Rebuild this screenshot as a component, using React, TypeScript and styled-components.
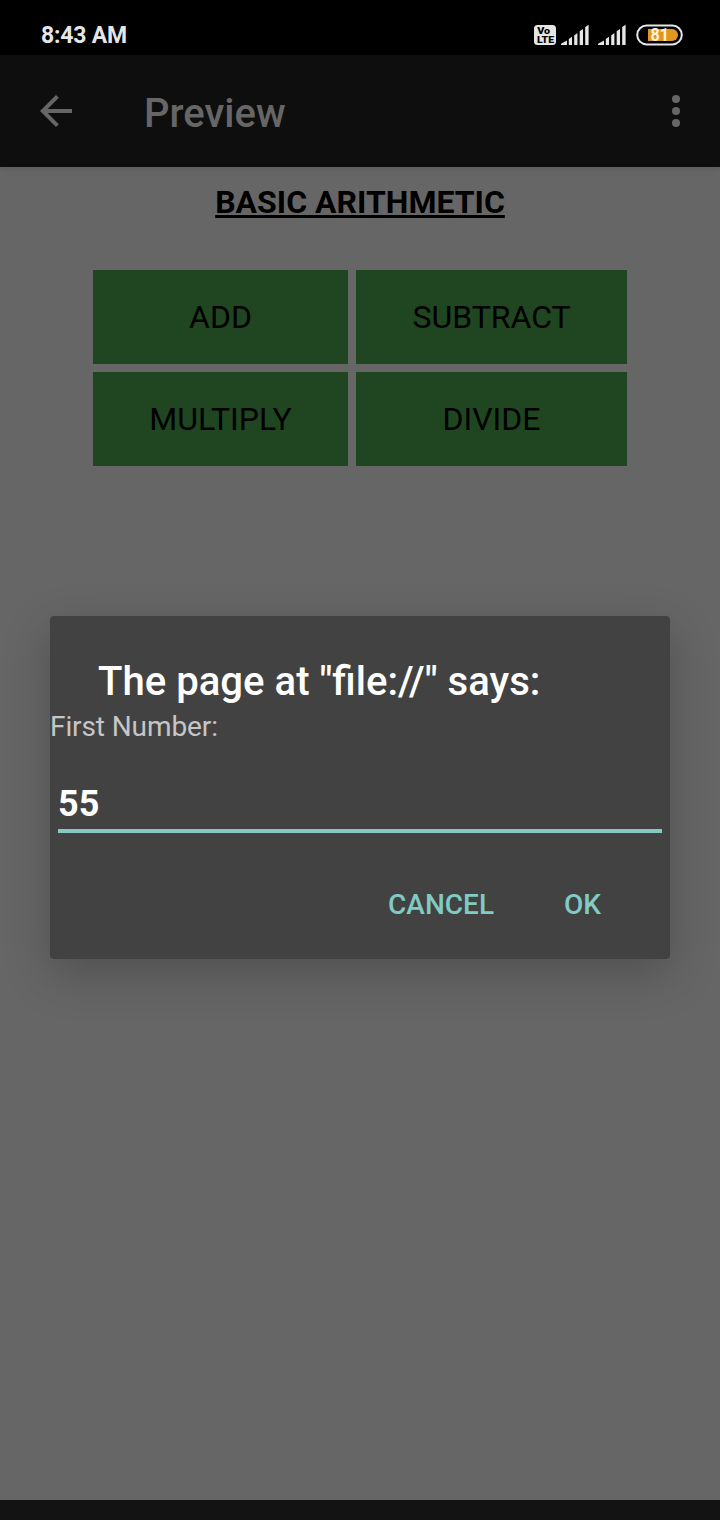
import React from "react";
import styled, { createGlobalStyle } from "styled-components";

const GlobalStyle = createGlobalStyle`
  * { box-sizing: border-box; }
  body {
    margin: 0;
    background: #666666;
    font-family: Roboto, "Liberation Sans", sans-serif;
  }
  button, input { font-family: inherit; }
`;

const Screen = styled.div`
  position: relative;
  display: flex;
  flex-direction: column;
  width: 720px;
  height: 1520px;
  overflow: hidden;
  background: #666666;
`;

const StatusBar = styled.header`
  display: flex;
  align-items: center;
  justify-content: space-between;
  height: 55px;
  padding: 15px 37px 0 41px;
  background: #000;
`;

const Clock = styled.span`
  padding-top: 2px;
  color: #e6e6e6;
  font-size: 23px;
  font-weight: 700;
  letter-spacing: -0.2px;
  line-height: 38px;
`;

const Indicators = styled.svg`
  display: block;
  width: 150px;
  height: 24px;
`;

const Toolbar = styled.nav`
  display: flex;
  align-items: center;
  height: 112px;
  padding: 0 20px 0 32px;
  background: #0e0e0e;
  box-shadow: 0 1px 6px rgba(0, 0, 0, 0.12);
`;

const IconButton = styled.button`
  display: flex;
  width: 48px;
  height: 48px;
  padding: 0;
  border: 0;
  background: none;
  color: #666666;
`;

const ToolbarTitle = styled.h1`
  flex: 1;
  margin: 0 0 0 64px;
  padding-top: 5px;
  color: #666666;
  font-size: 40px;
  font-weight: 500;
  line-height: 47px;
`;

const Page = styled.main`
  flex: 1;
  display: flex;
  flex-direction: column;
  align-items: center;
  padding-top: 16px;
`;

const Heading = styled.h2`
  margin: 0 0 49px;
  color: #000;
  font-size: 32px;
  font-weight: 700;
  line-height: 38px;
  text-decoration: underline;
  text-decoration-thickness: 3px;
  text-decoration-skip-ink: none;
  text-underline-offset: 2px;
`;

const Operations = styled.div`
  display: grid;
  grid-template-columns: 255px 271px;
  grid-auto-rows: 94px;
  gap: 8px;
`;

const Operation = styled.button`
  padding: 0;
  border: 0;
  background: #1f4621;
  color: #000;
  font-size: 32px;
  line-height: 38px;
`;

const SystemBar = styled.footer`
  height: 20px;
  background: #131313;
`;

const Dialog = styled.section`
  position: absolute;
  top: 616px;
  left: 50px;
  display: flex;
  flex-direction: column;
  width: 620px;
  height: 343px;
  padding-top: 42px;
  border-radius: 4px;
  background: #424242;
  box-shadow: 0 15px 48px rgba(0, 0, 0, 0.22);
`;

const DialogTitle = styled.h2`
  margin: 0 48px;
  color: #fff;
  font-size: 40.12px;
  font-weight: 500;
  line-height: 47px;
  white-space: nowrap;
`;

const Message = styled.label`
  margin-top: 5px;
  color: #c6c6c6;
  font-size: 28px;
  letter-spacing: -0.1px;
  line-height: 33px;
`;

const Answer = styled.input`
  height: 51px;
  margin: 39px 8px 0;
  padding: 0 0 4px;
  border: 0;
  border-bottom: 4px solid #88c7c2;
  outline: 0;
  background: none;
  color: #fff;
  font-size: 36px;
  font-weight: 700;
  line-height: 43px;
`;

const Actions = styled.div`
  display: flex;
  justify-content: flex-end;
  gap: 70px;
  margin-top: 55px;
  padding-right: 69px;
`;

const Action = styled.button`
  padding: 0;
  border: 0;
  background: none;
  color: #80cbc4;
  font-size: 28px;
  font-weight: 500;
  line-height: 33px;
`;

const operations = ["ADD", "SUBTRACT", "MULTIPLY", "DIVIDE"];

const Signal = ({ x }: { x: number }) => (
  <g transform={`translate(${x} 0)`} fill="#e6e6e6">
    <path d="M0 22V20.8L6 17.5V22Z" />
    <path d="M7.8 16 11 13.8V22H7.8Z" />
    <path d="M13.2 12.5 16.4 10V22H13.2Z" />
    <path d="M18.7 8.3 22 6V22H18.7Z" />
    <path d="M24.2 4 27.6 1.7V22H24.2Z" />
  </g>
);

export default function App() {
  return (
    <Screen>
      <GlobalStyle />
      <StatusBar>
        <Clock>8:43 AM</Clock>
        <Indicators viewBox="0 0 150 24" fontFamily="Roboto, sans-serif" fontWeight="700">
          <rect x="1" y="2" width="22" height="20" rx="3.5" fill="#e6e6e6" />
          <text x="4.2" y="10.8" fontSize="8.5" fontWeight="900" textLength="13" lengthAdjust="spacingAndGlyphs">Vo</text>
          <text x="4" y="19.8" fontSize="9" fontWeight="900" textLength="17" lengthAdjust="spacingAndGlyphs">LTE</text>
          <Signal x={28} />
          <Signal x={65} />
          <rect x="104.2" y="2.4" width="44.6" height="19" rx="9.5" fill="none" stroke="#e6e6e6" strokeWidth="2" />
          <path d="M115 6H139A6 6 0 0 1 139 18H115Z" fill="#df9722" />
          <text x="117.5" y="18" fontSize="17.5" fill="#fff2d8" textLength="18.5" lengthAdjust="spacingAndGlyphs">81</text>
        </Indicators>
      </StatusBar>
      <Toolbar>
        <IconButton aria-label="Back">
          <svg width="48" height="48" viewBox="0 0 24 24" fill="currentColor">
            <path d="M20 11H7.83l5.59-5.59L12 4l-8 8 8 8 1.41-1.41L7.83 13H20z" />
          </svg>
        </IconButton>
        <ToolbarTitle>Preview</ToolbarTitle>
        <IconButton aria-label="More options">
          <svg width="48" height="48" viewBox="0 0 24 24" fill="currentColor">
            <circle cx="12" cy="6" r="2" />
            <circle cx="12" cy="12" r="2" />
            <circle cx="12" cy="18" r="2" />
          </svg>
        </IconButton>
      </Toolbar>
      <Page>
        <Heading>BASIC ARITHMETIC</Heading>
        <Operations>
          {operations.map((name) => (
            <Operation key={name}>{name}</Operation>
          ))}
        </Operations>
      </Page>
      <SystemBar />
      <Dialog role="dialog">
        <DialogTitle>The page at "file://" says:</DialogTitle>
        <Message htmlFor="answer">First Number:</Message>
        <Answer id="answer" defaultValue="55" />
        <Actions>
          <Action>CANCEL</Action>
          <Action>OK</Action>
        </Actions>
      </Dialog>
    </Screen>
  );
}
